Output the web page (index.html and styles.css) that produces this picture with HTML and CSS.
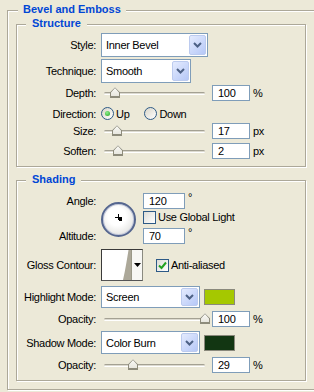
FILE: index.html
```html
<!DOCTYPE html>
<html lang="en">
<head>
  <meta charset="UTF-8" />
  <title>Bevel and Emboss</title>
  <link rel="stylesheet" href="styles.css">
</head>
<body>

  <div class="group outer">
    <span class="title">Bevel and Emboss</span>

    <!-- Structure -->
    <div class="group inner structure">
      <span class="title">Structure</span>

      <div class="row r-style">
        <span class="label">Style:</span>
        <div class="select w-style">
          <span class="value">Inner Bevel</span>
          <span class="drop"><svg width="9" height="6" viewBox="0 0 9 6"><polyline points="1,1 4.5,4.5 8,1" fill="none" stroke="#4d6185" stroke-width="2"/></svg></span>
        </div>
      </div>

      <div class="row r-tech">
        <span class="label">Technique:</span>
        <div class="select w-tech">
          <span class="value">Smooth</span>
          <span class="drop"><svg width="9" height="6" viewBox="0 0 9 6"><polyline points="1,1 4.5,4.5 8,1" fill="none" stroke="#4d6185" stroke-width="2"/></svg></span>
        </div>
      </div>

      <div class="row r-num r-depth">
        <span class="label">Depth:</span>
        <div class="slider"><span class="track"></span><span class="thumb" style="left: 6px"></span></div>
        <span class="field">100</span>
        <span class="unit">%</span>
      </div>

      <div class="row r-dir">
        <span class="label">Direction:</span>
        <span class="radio on"><span class="dot"></span></span>
        <span class="opt opt-up">Up</span>
        <span class="radio"></span>
        <span class="opt">Down</span>
      </div>

      <div class="row r-num">
        <span class="label">Size:</span>
        <div class="slider"><span class="track"></span><span class="thumb" style="left: 8px"></span></div>
        <span class="field">17</span>
        <span class="unit">px</span>
      </div>

      <div class="row r-num r-soften">
        <span class="label">Soften:</span>
        <div class="slider"><span class="track"></span><span class="thumb" style="left: 9px"></span></div>
        <span class="field">2</span>
        <span class="unit">px</span>
      </div>
    </div>

    <!-- Shading -->
    <div class="group inner shading">
      <span class="title">Shading</span>

      <div class="angle-block">
        <div class="angle-labels">
          <span class="label">Angle:</span>
          <span class="label">Altitude:</span>
        </div>
        <div class="dial">
          <svg width="31" height="31" viewBox="0 0 31 31">
            <line x1="12" y1="13.5" x2="19" y2="13.5" stroke="#000"/>
            <line x1="15.5" y1="10" x2="15.5" y2="16" stroke="#000"/>
            <rect x="16" y="14" width="3" height="3" fill="#000"/>
          </svg>
        </div>
        <div class="angle-fields">
          <div class="af-row">
            <span class="field w-angle">120</span>
            <span class="deg">°</span>
          </div>
          <div class="af-row af-check">
            <span class="check"></span>
            <span class="check-text">Use Global Light</span>
          </div>
          <div class="af-row">
            <span class="field w-angle">70</span>
            <span class="deg">°</span>
          </div>
        </div>
      </div>

      <div class="row r-gloss">
        <span class="label">Gloss Contour:</span>
        <div class="contour">
          <span class="preview">
            <svg width="29" height="30" viewBox="0 0 29 30"><path d="M21 30 C23.5 19 25 9 26.5 0 L29 0 L29 30 Z" fill="#aca899"/></svg>
          </span>
          <span class="contour-drop"><svg width="7" height="4" viewBox="0 0 7 4"><polygon points="0,0 7,0 3.5,4" fill="#000"/></svg></span>
        </div>
        <span class="check on aa"><svg width="11" height="11" viewBox="0 0 11 11"><polyline points="2,5.5 4.5,8 9,2.5" fill="none" stroke="#21a121" stroke-width="2"/></svg></span>
        <span class="check-text">Anti-aliased</span>
      </div>

      <div class="row r-mode r-high">
        <span class="label">Highlight Mode:</span>
        <div class="select w-mode">
          <span class="value">Screen</span>
          <span class="drop"><svg width="9" height="6" viewBox="0 0 9 6"><polyline points="1,1 4.5,4.5 8,1" fill="none" stroke="#4d6185" stroke-width="2"/></svg></span>
        </div>
        <span class="swatch lime"></span>
      </div>

      <div class="row r-num r-hopa">
        <span class="label">Opacity:</span>
        <div class="slider"><span class="track"></span><span class="thumb" style="left: 96px"></span></div>
        <span class="field">100</span>
        <span class="unit">%</span>
      </div>

      <div class="row r-mode r-shadow">
        <span class="label">Shadow Mode:</span>
        <div class="select w-mode">
          <span class="value">Color Burn</span>
          <span class="drop"><svg width="9" height="6" viewBox="0 0 9 6"><polyline points="1,1 4.5,4.5 8,1" fill="none" stroke="#4d6185" stroke-width="2"/></svg></span>
        </div>
        <span class="swatch forest"></span>
      </div>

      <div class="row r-num r-sopa">
        <span class="label">Opacity:</span>
        <div class="slider"><span class="track"></span><span class="thumb" style="left: 24px"></span></div>
        <span class="field">29</span>
        <span class="unit">%</span>
      </div>
    </div>
  </div>

</body>
</html>
```

FILE: styles.css
```css
body {
  margin: 0;
  background: #ece9d8;
  font-family: 'Liberation Sans', Arial, sans-serif;
  font-size: 11px;
  letter-spacing: -0.3px;
  color: #000;
  overflow: hidden;
  height: 392px;
}

/* group boxes with an etched line */
.group {
  position: relative;
  box-sizing: border-box;
  border: 1px solid #aca899;
  box-shadow: inset 1px 1px 0 #fff, 1px 1px 0 #fff;
}

/* the outer box runs on past the right edge of the panel */
.outer {
  margin: 10px 0 0 7px;
  width: 307px;
  border-right: 0;
  padding: 13px 0 8px 8px;
}

.inner {
  width: 290px;
}

.structure {
  padding: 8px 0 7px;
}

.shading {
  margin-top: 13px;
  padding: 12px 0 7px;
}

.title {
  position: absolute;
  top: -8px;
  left: 9px;
  padding: 0 6px;
  line-height: 13px;
  background: #ece9d8;
  color: #0046d5;
  font-weight: bold;
  letter-spacing: 0;
}

.outer > .title {
  left: 10px;
  padding: 0 5px;
}

/* rows */
.row {
  display: flex;
  align-items: center;
}

.label {
  width: 79px;
  margin-right: 5px;
  text-align: right;
  flex: none;
  white-space: nowrap;
}

.r-style { height: 24px; }
.r-tech { height: 24px; margin-top: 2px; }
.r-num { height: 16px; }
.r-depth { margin-top: 2px; }
.r-dir { height: 19px; padding-top: 3px; }
.r-soften { margin-top: 4px; }

.r-gloss { height: 32px; margin-top: 5px; }
.r-high { height: 22px; margin-top: 5px; }
.r-hopa { margin-top: 3px; }
.r-shadow { height: 23px; margin-top: 4px; }
.r-sopa { margin-top: 3px; }

/* combo boxes */
.select {
  box-sizing: border-box;
  height: 100%;
  display: flex;
  border: 1px solid #7f9db9;
  background: #fff;
  padding: 1px;
}

.w-style { width: 107px; }
.w-tech { width: 90px; }
.w-mode { width: 99px; }

.select .value {
  flex: 1;
  display: flex;
  align-items: center;
  padding-left: 3px;
}

.drop {
  box-sizing: border-box;
  width: 17px;
  display: flex;
  align-items: center;
  justify-content: center;
  border: 1px solid #bccbef;
  border-radius: 2px;
  background: linear-gradient(135deg, #e4ebfe, #b6c8f7);
}

/* sliders */
.slider {
  position: relative;
  width: 101px;
  height: 16px;
  margin: 0 7px 0 3px;
  flex: none;
}

.track {
  position: absolute;
  left: 0;
  right: 0;
  top: 7px;
  height: 1px;
  background: #dcdad0;
  border-top: 1px solid #a4a193;
  border-bottom: 1px solid #fff;
  border-radius: 2px;
}

.thumb {
  position: absolute;
  top: 2px;
  width: 10px;
  height: 11px;
  background:
    linear-gradient(#21a121, #21a121) bottom / 100% 2px no-repeat,
    linear-gradient(#fbfbf8, #e4e3da);
  clip-path: polygon(50% 0, 100% 45%, 100% 100%, 0 100%, 0 45%);
}

.thumb::before {
  content: "";
  position: absolute;
  inset: 0;
  background: #8e8c7c;
  clip-path: polygon(50% 0, 100% 45%, 100% 100%, 0 100%, 0 45%, 10% 50%, 10% 82%, 90% 82%, 90% 50%, 50% 9%, 10% 50%, 0 45%);
}

/* text fields */
.field {
  box-sizing: border-box;
  width: 38px;
  height: 16px;
  display: flex;
  align-items: center;
  padding-left: 5px;
  border: 1px solid #7f9db9;
  background: #fff;
  flex: none;
}

.unit {
  margin-left: 3px;
}

/* radios and checkboxes */
.radio {
  box-sizing: border-box;
  width: 13px;
  height: 13px;
  border-radius: 50%;
  border: 1px solid #2d5a86;
  background: linear-gradient(135deg, #d8d5c8, #fff);
  display: flex;
  align-items: center;
  justify-content: center;
  flex: none;
}

.radio .dot {
  width: 5px;
  height: 5px;
  border-radius: 50%;
  background: radial-gradient(circle at 40% 35%, #8ef08e, #21a121);
}

.opt {
  margin-left: 2px;
}

.opt-up {
  margin-right: 15px;
}

.check {
  box-sizing: border-box;
  width: 13px;
  height: 13px;
  border: 1px solid #2d5a86;
  background: linear-gradient(135deg, #dcdcd7, #fff);
  display: flex;
  align-items: center;
  justify-content: center;
  flex: none;
}

.check-text {
  margin-left: 2px;
}

/* angle dial */
.angle-block {
  display: flex;
  height: 51px;
}

.angle-labels {
  display: flex;
  flex-direction: column;
  justify-content: space-between;
}

.angle-labels .label {
  height: 16px;
  line-height: 16px;
}

.dial {
  box-sizing: border-box;
  width: 35px;
  height: 35px;
  margin: 9px 7px 0 0;
  border-radius: 50%;
  border: 2px solid #55668f;
  background: radial-gradient(circle at 45% 40%, #fff 35%, #d6d6d2 100%);
  box-shadow: inset 0 0 0 1px #c3c9dc;
  flex: none;
}

.dial svg {
  display: block;
}

.angle-fields {
  display: flex;
  flex-direction: column;
}

.af-row {
  display: flex;
  height: 16px;
}

.af-check {
  height: 19px;
  padding-top: 2px;
  box-sizing: border-box;
  align-items: flex-start;
}

.af-check .check-text {
  line-height: 13px;
}

.w-angle {
  width: 42px;
}

.deg {
  margin-left: 3px;
  line-height: 9px;
}

/* gloss contour */
.contour {
  box-sizing: border-box;
  width: 42px;
  height: 32px;
  display: flex;
  border: 1px solid #3a3a3a;
  border-right-color: #8a8a80;
  border-bottom-color: #555;
  background: #fff;
  flex: none;
}

.preview {
  width: 29px;
  border-right: 1px solid #9a9888;
}

.preview svg {
  display: block;
}

.contour-drop {
  flex: 1;
  display: flex;
  align-items: center;
  justify-content: center;
  background: #f7f7f4;
}

.aa {
  margin-left: 13px;
}

/* colour swatches */
.swatch {
  box-sizing: border-box;
  width: 31px;
  height: 16px;
  margin-left: 4px;
  border: 1px solid #8a897c;
  flex: none;
}

.lime {
  background: #a5c800;
}

.forest {
  background: #123612;
}
```
